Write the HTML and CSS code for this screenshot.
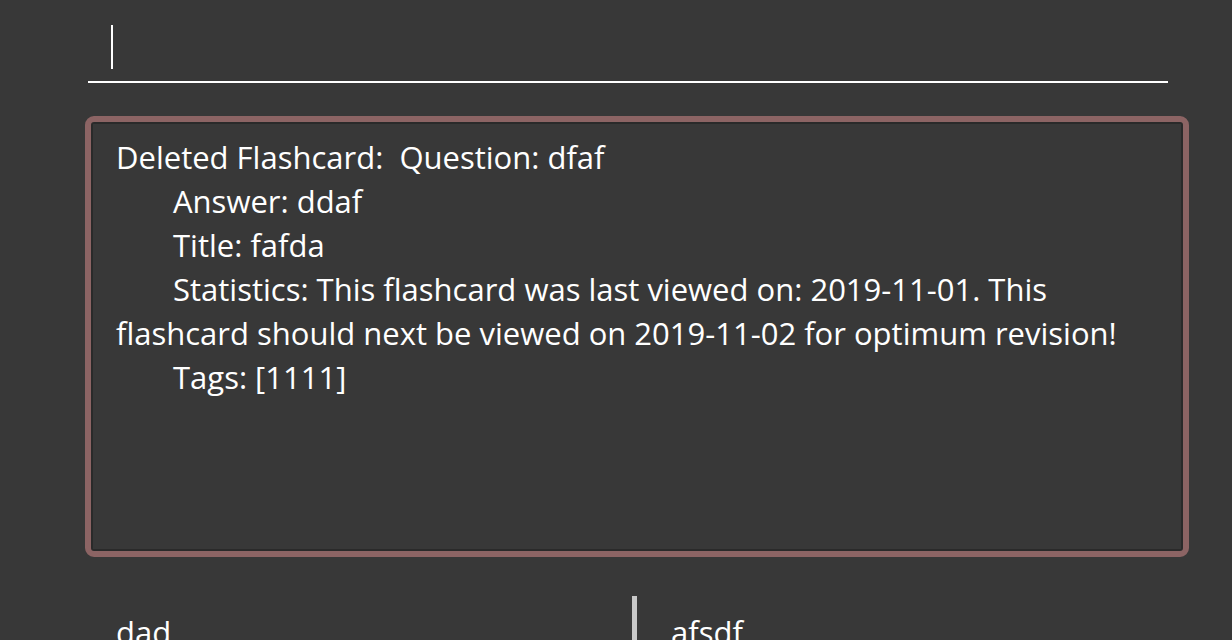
FILE: index.html
```html
<!DOCTYPE html>
<html>
<head>
<meta charset="utf-8">
<link rel="stylesheet" href="styles.css">
</head>
<body>
<div class="app">
  <div class="command">
    <div class="field"><span class="caret"></span></div>
  </div>
  <div class="result">
    <div class="result-inner">
      <div class="result-text">Deleted Flashcard:  Question: dfaf
	Answer: ddaf
	Title: fafda
	Statistics: This flashcard was last viewed on: 2019-11-01. This flashcard should next be viewed on 2019-11-02 for optimum revision!
	Tags: [1111]</div>
    </div>
  </div>
  <div class="lists">
    <div class="list-cell left"><span class="item">dad</span></div>
    <div class="divider"></div>
    <div class="list-cell right"><span class="item">afsdf</span></div>
  </div>
</div>
</body>
</html>
```
FILE: styles.css
```css
html, body {
  margin: 0;
  padding: 0;
  background: #383838;
  overflow: hidden;
}
.app {
  width: 1232px;
  height: 640px;
  font-family: "Open Sans", Lato, sans-serif;
  color: #ffffff;
  font-variant-ligatures: none;
}
.command {
  padding: 0 64px 0 88px;
}
.field {
  border-bottom: 2px solid #ffffff;
  padding-left: 23px;
  padding-top: 25px;
  box-sizing: border-box;
  height: 83px;
}
.caret {
  display: block;
  width: 2px;
  height: 44px;
  background: #ffffff;
}
.result {
  margin: 33px 0 0 85px;
  width: 1104px;
  height: 441px;
  box-sizing: border-box;
  border: 6px solid #8c6464;
  border-radius: 9px;
  background: #2a2a2a;
  padding: 2px;
}
.result-inner {
  height: 100%;
  background: #383838;
  padding: 11px 20px 0 23px;
  box-sizing: border-box;
}
.result-text {
  white-space: pre-wrap;
  tab-size: 57px;
  -moz-tab-size: 57px;
  font-size: 31px;
  line-height: 44px;
}
.lists {
  display: flex;
  margin-top: 39px;
  height: 60px;
}
.list-cell {
  font-size: 31px;
  line-height: 44px;
  padding-top: 14px;
}
.list-cell.left {
  padding-left: 116px;
  box-sizing: border-box;
  width: 632px;
}
.divider {
  width: 5px;
  background: #c8c8c8;
  height: 60px;
}
.list-cell.right {
  padding-left: 34px;
}
```
